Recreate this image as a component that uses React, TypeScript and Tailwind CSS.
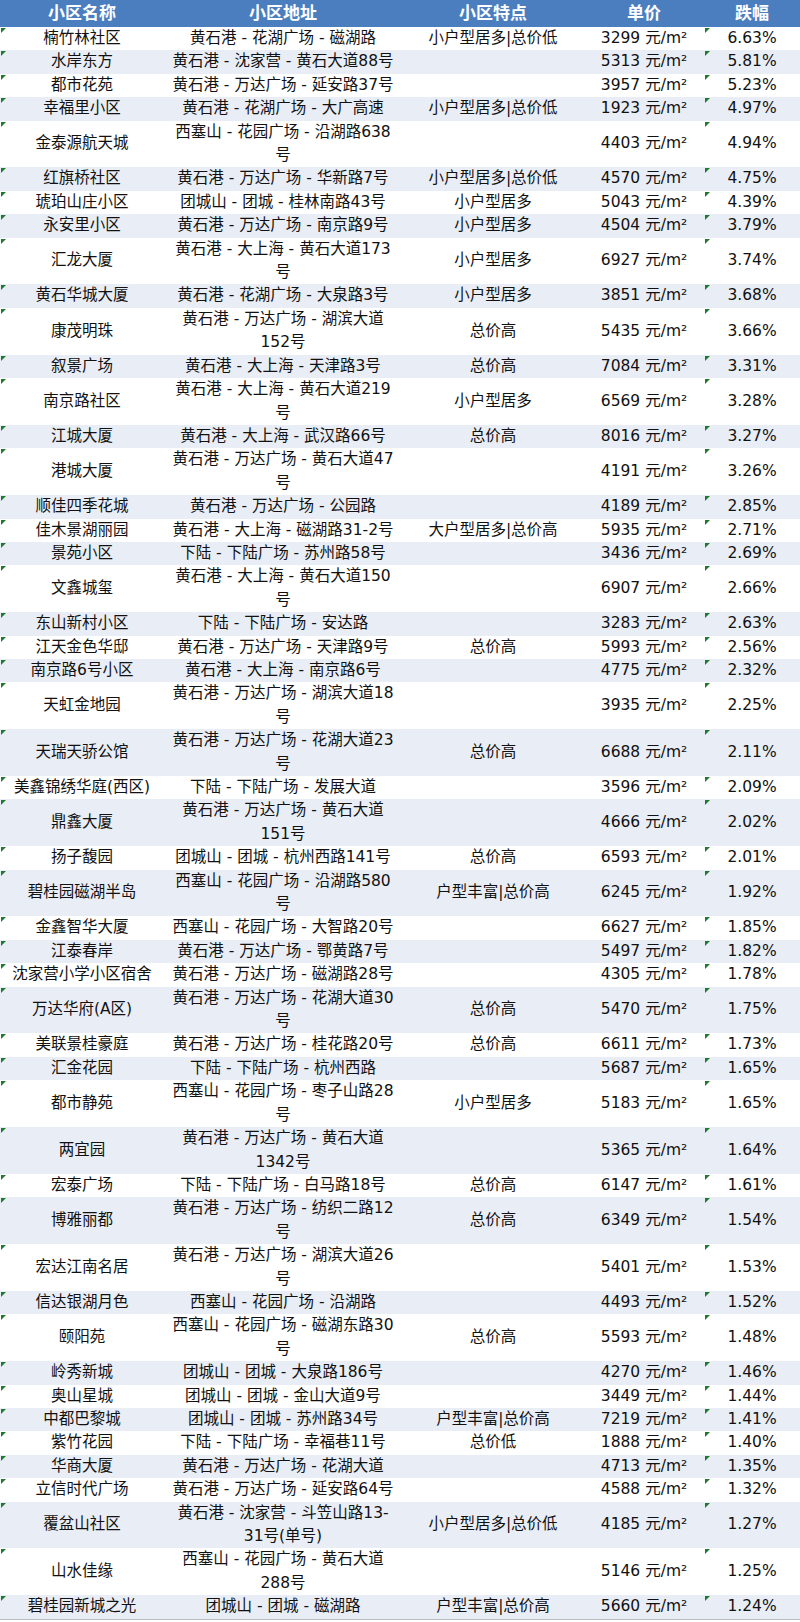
import React from "react";

type Row = [string, string, string, string, string];

const rows: Row[] = [
  ["楠竹林社区", "黄石港 - 花湖广场 - 磁湖路", "小户型居多|总价低", "3299", "6.63%"],
  ["水岸东方", "黄石港 - 沈家营 - 黄石大道88号", "", "5313", "5.81%"],
  ["都市花苑", "黄石港 - 万达广场 - 延安路37号", "", "3957", "5.23%"],
  ["幸福里小区", "黄石港 - 花湖广场 - 大广高速", "小户型居多|总价低", "1923", "4.97%"],
  ["金泰源航天城", "西塞山 - 花园广场 - 沿湖路638\n号", "", "4403", "4.94%"],
  ["红旗桥社区", "黄石港 - 万达广场 - 华新路7号", "小户型居多|总价低", "4570", "4.75%"],
  ["琥珀山庄小区", "团城山 - 团城 - 桂林南路43号", "小户型居多", "5043", "4.39%"],
  ["永安里小区", "黄石港 - 万达广场 - 南京路9号", "小户型居多", "4504", "3.79%"],
  ["汇龙大厦", "黄石港 - 大上海 - 黄石大道173\n号", "小户型居多", "6927", "3.74%"],
  ["黄石华城大厦", "黄石港 - 花湖广场 - 大泉路3号", "小户型居多", "3851", "3.68%"],
  ["康茂明珠", "黄石港 - 万达广场 - 湖滨大道\n152号", "总价高", "5435", "3.66%"],
  ["叙景广场", "黄石港 - 大上海 - 天津路3号", "总价高", "7084", "3.31%"],
  ["南京路社区", "黄石港 - 大上海 - 黄石大道219\n号", "小户型居多", "6569", "3.28%"],
  ["江城大厦", "黄石港 - 大上海 - 武汉路66号", "总价高", "8016", "3.27%"],
  ["港城大厦", "黄石港 - 万达广场 - 黄石大道47\n号", "", "4191", "3.26%"],
  ["顺佳四季花城", "黄石港 - 万达广场 - 公园路", "", "4189", "2.85%"],
  ["佳木景湖丽园", "黄石港 - 大上海 - 磁湖路31-2号", "大户型居多|总价高", "5935", "2.71%"],
  ["景苑小区", "下陆 - 下陆广场 - 苏州路58号", "", "3436", "2.69%"],
  ["文鑫城玺", "黄石港 - 大上海 - 黄石大道150\n号", "", "6907", "2.66%"],
  ["东山新村小区", "下陆 - 下陆广场 - 安达路", "", "3283", "2.63%"],
  ["江天金色华邸", "黄石港 - 万达广场 - 天津路9号", "总价高", "5993", "2.56%"],
  ["南京路6号小区", "黄石港 - 大上海 - 南京路6号", "", "4775", "2.32%"],
  ["天虹金地园", "黄石港 - 万达广场 - 湖滨大道18\n号", "", "3935", "2.25%"],
  ["天瑞天骄公馆", "黄石港 - 万达广场 - 花湖大道23\n号", "总价高", "6688", "2.11%"],
  ["美鑫锦绣华庭(西区)", "下陆 - 下陆广场 - 发展大道", "", "3596", "2.09%"],
  ["鼎鑫大厦", "黄石港 - 万达广场 - 黄石大道\n151号", "", "4666", "2.02%"],
  ["扬子馥园", "团城山 - 团城 - 杭州西路141号", "总价高", "6593", "2.01%"],
  ["碧桂园磁湖半岛", "西塞山 - 花园广场 - 沿湖路580\n号", "户型丰富|总价高", "6245", "1.92%"],
  ["金鑫智华大厦", "西塞山 - 花园广场 - 大智路20号", "", "6627", "1.85%"],
  ["江泰春岸", "黄石港 - 万达广场 - 鄂黄路7号", "", "5497", "1.82%"],
  ["沈家营小学小区宿舍", "黄石港 - 万达广场 - 磁湖路28号", "", "4305", "1.78%"],
  ["万达华府(A区)", "黄石港 - 万达广场 - 花湖大道30\n号", "总价高", "5470", "1.75%"],
  ["美联景桂豪庭", "黄石港 - 万达广场 - 桂花路20号", "总价高", "6611", "1.73%"],
  ["汇金花园", "下陆 - 下陆广场 - 杭州西路", "", "5687", "1.65%"],
  ["都市静苑", "西塞山 - 花园广场 - 枣子山路28\n号", "小户型居多", "5183", "1.65%"],
  ["两宜园", "黄石港 - 万达广场 - 黄石大道\n1342号", "", "5365", "1.64%"],
  ["宏泰广场", "下陆 - 下陆广场 - 白马路18号", "总价高", "6147", "1.61%"],
  ["博雅丽都", "黄石港 - 万达广场 - 纺织二路12\n号", "总价高", "6349", "1.54%"],
  ["宏达江南名居", "黄石港 - 万达广场 - 湖滨大道26\n号", "", "5401", "1.53%"],
  ["信达银湖月色", "西塞山 - 花园广场 - 沿湖路", "", "4493", "1.52%"],
  ["颐阳苑", "西塞山 - 花园广场 - 磁湖东路30\n号", "总价高", "5593", "1.48%"],
  ["岭秀新城", "团城山 - 团城 - 大泉路186号", "", "4270", "1.46%"],
  ["奥山星城", "团城山 - 团城 - 金山大道9号", "", "3449", "1.44%"],
  ["中都巴黎城", "团城山 - 团城 - 苏州路34号", "户型丰富|总价高", "7219", "1.41%"],
  ["紫竹花园", "下陆 - 下陆广场 - 幸福巷11号", "总价低", "1888", "1.40%"],
  ["华商大厦", "黄石港 - 万达广场 - 花湖大道", "", "4713", "1.35%"],
  ["立信时代广场", "黄石港 - 万达广场 - 延安路64号", "", "4588", "1.32%"],
  ["覆盆山社区", "黄石港 - 沈家营 - 斗笠山路13-\n31号(单号)", "小户型居多|总价低", "4185", "1.27%"],
  ["山水佳缘", "西塞山 - 花园广场 - 黄石大道\n288号", "", "5146", "1.25%"],
  ["碧桂园新城之光", "团城山 - 团城 - 磁湖路", "户型丰富|总价高", "5660", "1.24%"],
];

const Tri = () => (
  <span className="absolute left-[1px] top-[1px] w-0 h-0 border-t-[5px] border-t-[#1f7a2e] border-r-[5px] border-r-transparent" />
);

const gridCols = "grid grid-cols-[164px_238px_182px_120px_96px]";

export default function App() {
  return (
    <div
      className="w-[800px] bg-white text-[#111111]"
      style={{ fontFamily: '"DejaVu Sans", "Noto Sans CJK SC", sans-serif' }}
    >
      <div className={`${gridCols} h-[27px] bg-[#4b7ebf] text-white font-bold text-[17px] leading-[27px]`}>
        <div className="text-center">小区名称</div>
        <div className="text-center">小区地址</div>
        <div className="text-center">小区特点</div>
        <div className="text-center">单价</div>
        <div className="text-center">跌幅</div>
      </div>
      <div className="border-b border-[#b9bcc2]">
        {rows.map((r, i) => (
          <div
            key={i}
            className={`${gridCols} text-[15.5px] leading-[23.4px] ${i % 2 === 1 ? "bg-[#e9eef6]" : "bg-white"}`}
          >
            <div className="relative flex items-center justify-center whitespace-nowrap">
              <Tri />
              {r[0]}
            </div>
            <div className="flex items-center justify-center whitespace-pre text-center">{r[1]}</div>
            <div className="flex items-center justify-center whitespace-nowrap">{r[2]}</div>
            <div className="flex items-center justify-center whitespace-nowrap">
              {r[3]} 元/m²
            </div>
            <div className="relative flex items-center justify-center whitespace-nowrap">
              <Tri />
              {r[4]}
            </div>
          </div>
        ))}
      </div>
    </div>
  );
}
